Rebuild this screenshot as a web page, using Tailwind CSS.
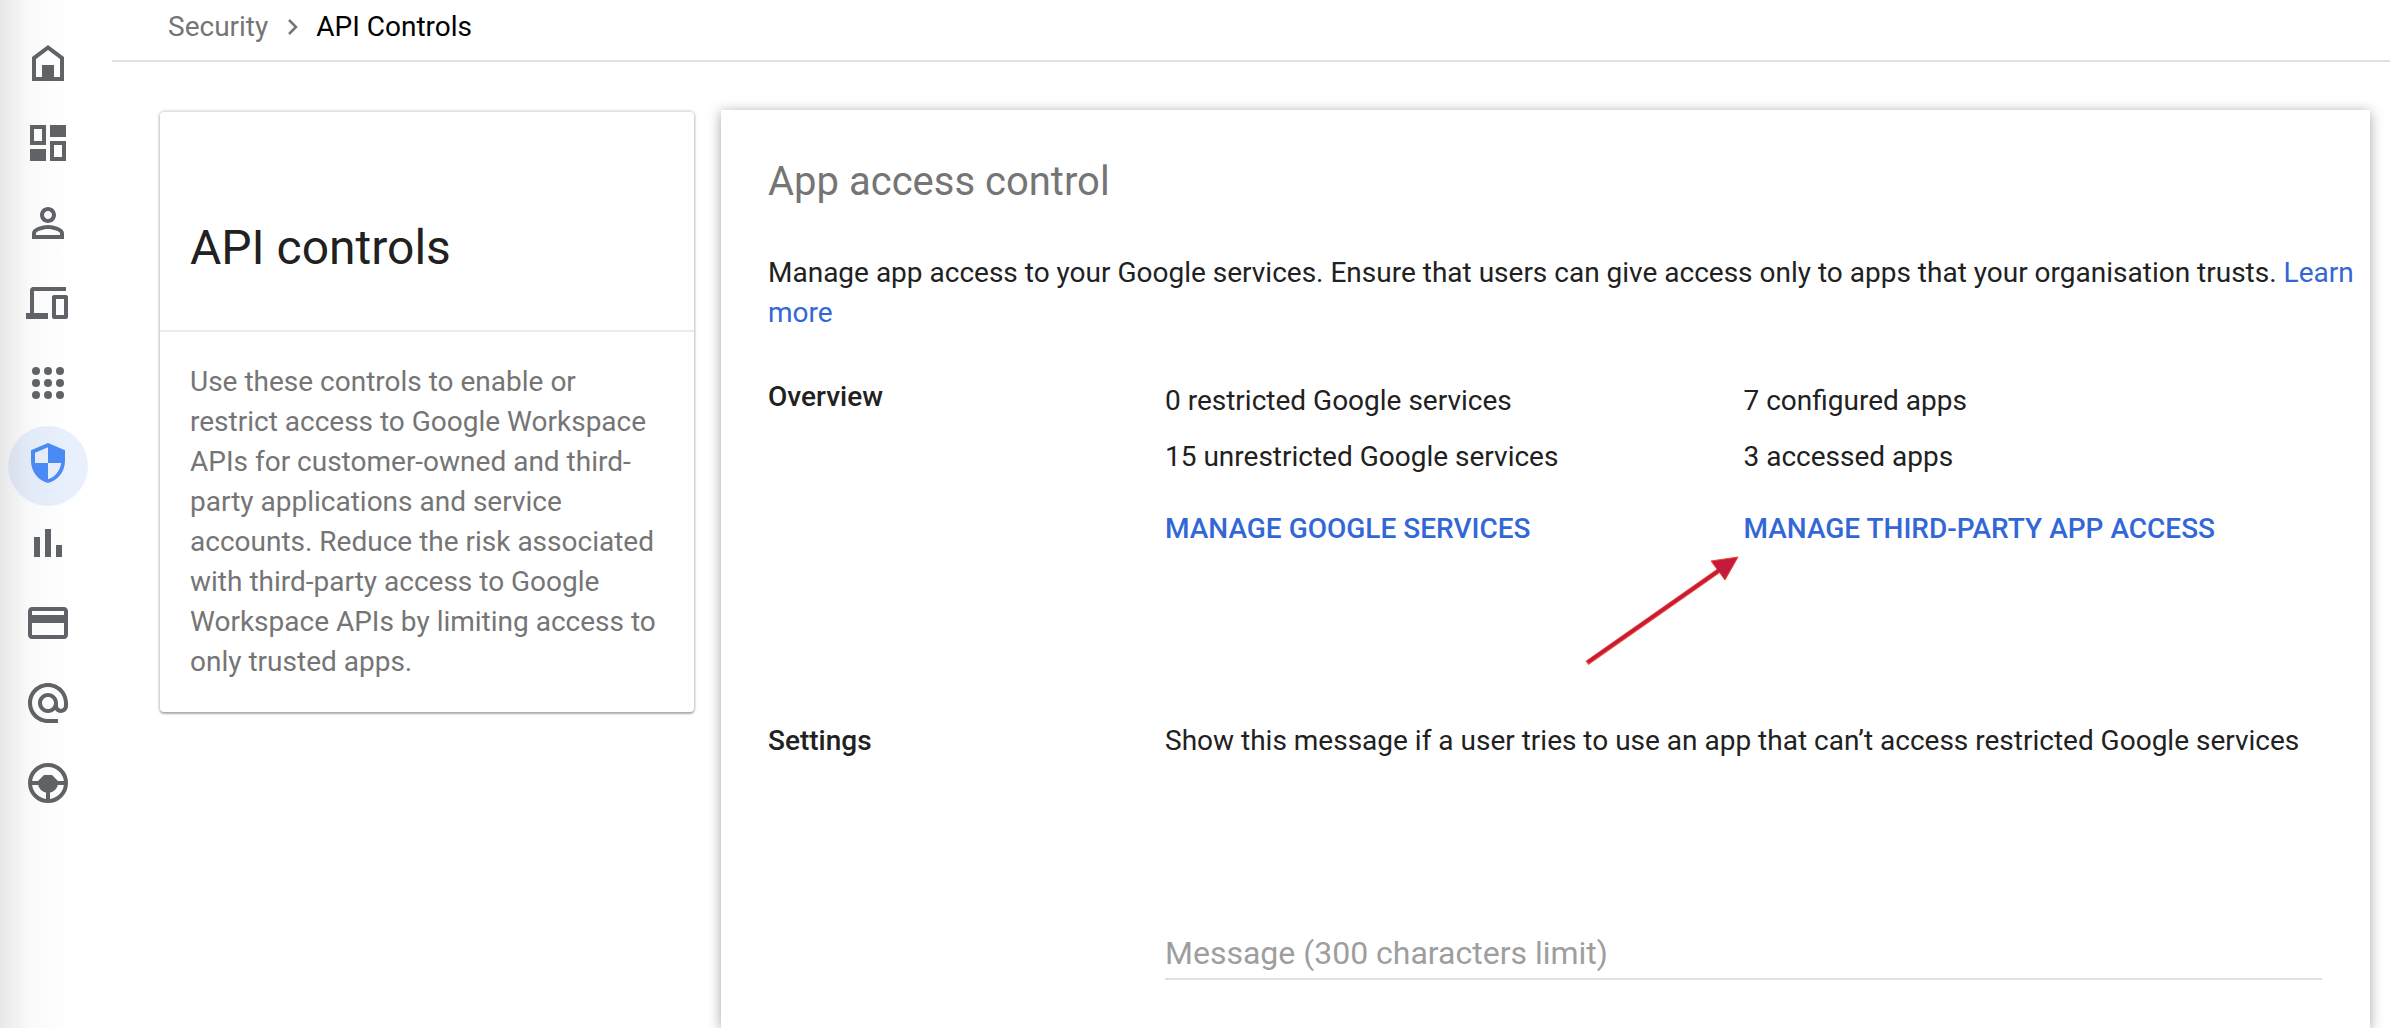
<!DOCTYPE html>
<html lang="en">
<head>
<meta charset="utf-8">
<title>API Controls</title>
<script src="https://cdn.jsdelivr.net/npm/@tailwindcss/browser@4"></script>
</head>
<body class="min-h-screen overflow-hidden bg-white font-[Roboto,sans-serif] text-[28px] leading-10 text-[#212121]">
<div class="flex h-screen">
  <nav aria-label="Admin sections" class="flex w-28 shrink-0 flex-col bg-linear-to-r from-[#e8e8e8] via-[#f9f9f9] via-25% to-white to-60% pt-[26px] pl-2 text-[#5f6368]">
    <a href="#" aria-label="Home" class="flex size-20 items-center justify-center pb-1.5"><svg class="size-12" viewBox="0 0 24 24" fill="currentColor"><path d="M12 3L4 9v12h16V9L12 3zm6 16H6v-9l6-4.500 6 4.500V19z"/><path d="M9 13h6v7H9z"/></svg></a>
    <a href="#" aria-label="Dashboard" class="flex size-20 items-center justify-center pb-1.5"><svg class="size-12" viewBox="0 0 24 24" fill="currentColor"><path fill-rule="evenodd" d="M3 3h8v10H3zM5 5v6h4V5zM13 3h8v6h-8zM3 15h8v6H3zM13 11h8v10h-8zM15 13v6h4v-6z"/></svg></a>
    <a href="#" aria-label="Directory" class="flex size-20 items-center justify-center pb-1.5"><svg class="size-12" viewBox="0 0 24 24" fill="currentColor"><path d="M12 6c1.100 0 2 .9 2 2s-.9 2-2 2-2-.9-2-2 .9-2 2-2m0 9c2.700 0 5.800 1.290 6 2v1H6v-.99c.2-.72 3.300-2.010 6-2.010m0-11C9.790 4 8 5.790 8 8s1.790 4 4 4 4-1.790 4-4-1.790-4-4-4zm0 9c-2.670 0-8 1.340-8 4v3h16v-3c0-2.660-5.330-4-8-4z"/></svg></a>
    <a href="#" aria-label="Devices" class="flex size-20 items-center justify-center pb-1.5"><svg class="size-12" viewBox="0 0 24 24" fill="currentColor"><path d="M4 6h17V4H5c-1.650 0-2 .9-2 2v11H1v3h11v-3H5V6zM21 8h-6c-.55 0-1 .45-1 1v10c0 .55.45 1 1 1h6c.55 0 1-.45 1-1V9c0-.55-.45-1-1-1zm-1 10h-4v-8h4v8z"/></svg></a>
    <a href="#" aria-label="Apps" class="flex size-20 items-center justify-center pb-1.5"><svg class="size-12" viewBox="0 0 24 24" fill="currentColor"><circle cx="6" cy="6" r="2"/><circle cx="12" cy="6" r="2"/><circle cx="18" cy="6" r="2"/><circle cx="6" cy="12" r="2"/><circle cx="12" cy="12" r="2"/><circle cx="18" cy="12" r="2"/><circle cx="6" cy="18" r="2"/><circle cx="12" cy="18" r="2"/><circle cx="18" cy="18" r="2"/></svg></a>
    <a href="#" aria-label="Security" aria-current="page" class="flex size-20 items-center justify-center rounded-full bg-[#4285f4]/12 pb-1.5 text-[#4a8af4]"><svg class="size-12" viewBox="0 0 24 24" fill="currentColor"><path fill-rule="evenodd" d="M12 2L3.500 5.600V11c0 5.200 3.600 9.900 8.500 11 4.900-1.100 8.500-5.800 8.500-11V5.600zM12 4.100V12h6.600c-.5 3.900-3.100 7.200-6.600 8.100V12H5.500V6.850z"/></svg></a>
    <a href="#" aria-label="Reporting" class="flex size-20 items-center justify-center pb-1.5"><svg class="size-12" viewBox="0 0 24 24" fill="currentColor"><path d="M5 9h3v10H5zM10.500 5h3v14h-3zM16 13h3v6h-3z"/></svg></a>
    <a href="#" aria-label="Billing" class="flex size-20 items-center justify-center pb-1.5"><svg class="size-12" viewBox="0 0 24 24" fill="currentColor"><path d="M20 4H4c-1.110 0-1.990.89-1.990 2L2 18c0 1.110.89 2 2 2h16c1.110 0 2-.89 2-2V6c0-1.110-.89-2-2-2zm0 14H4v-6h16v6zm0-10H4V6h16v2z"/></svg></a>
    <a href="#" aria-label="Account" class="flex size-20 items-center justify-center pb-1.5"><svg class="size-12" viewBox="0 0 24 24" fill="currentColor"><path d="M12 2C6.480 2 2 6.480 2 12s4.480 10 10 10h5v-2h-5c-4.340 0-8-3.660-8-8s3.660-8 8-8 8 3.660 8 8v1.430c0 .79-.71 1.570-1.500 1.570s-1.500-.78-1.500-1.570V12c0-2.760-2.240-5-5-5s-5 2.240-5 5 2.240 5 5 5c1.380 0 2.640-.56 3.540-1.470.65.89 1.770 1.470 2.960 1.470 1.970 0 3.500-1.600 3.500-3.570V12c0-5.520-4.480-10-10-10zm0 13c-1.660 0-3-1.340-3-3s1.340-3 3-3 3 1.340 3 3-1.340 3-3 3z"/></svg></a>
    <a href="#" aria-label="Rules" class="flex size-20 items-center justify-center pb-1.5"><svg class="size-12" viewBox="0 0 24 24" fill="none" stroke="currentColor" stroke-width="2"><circle cx="12" cy="12" r="9"/><path d="M3 12h18M12 12v9"/><path fill="currentColor" stroke="none" d="M10 8h4l3 3v1a5 5 0 0 1-10 0v-1z"/></svg></a>
  </nav>

  <div class="flex min-w-0 grow flex-col">
    <header class="flex h-[62px] shrink-0 items-center border-b-2 border-[#e0e0e0] pb-1.5 pl-14">
      <nav aria-label="Breadcrumb" class="flex items-center">
        <a href="#" class="text-[#757575]">Security</a>
        <svg class="mx-4 size-4" viewBox="0 0 16 16" fill="none" stroke="#757575" stroke-width="2.500"><path d="M5 1l7 7-7 7"/></svg>
        <span class="text-black" aria-current="page">API Controls</span>
      </nav>
    </header>

    <div class="flex min-h-0 grow items-start pt-12 pr-5 pl-12">
      <aside class="mt-0.5 mr-[27px] w-[534px] shrink-0 rounded-sm bg-white shadow-[0_0_0_2px_rgba(0,0,0,0.04),0_2px_2px_rgba(0,0,0,0.24),0_0_4px_rgba(0,0,0,0.18)]">
        <h1 class="border-b-2 border-[#ebebeb] px-[30px] pt-[106px] pb-[52px] text-[48px] leading-[60px]">API controls</h1>
        <p class="p-[30px] text-[#757575]">Use these controls to enable or restrict access to Google Workspace APIs for customer-owned and third-party applications and service accounts. Reduce the risk associated with third-party access to Google Workspace APIs by limiting access to only trusted apps.</p>
      </aside>

      <main class="h-full grow bg-white pt-[49px] pl-[47px] shadow-[0_2px_12px_rgba(0,0,0,0.36)]">
        <h2 class="text-[40px] leading-[46px] text-[#757575]">App access control</h2>
        <p class="mt-12">Manage app access to your Google services. Ensure that users can give access only to apps that your organisation trusts. <a href="#" class="text-[#3367d6]">Learn more</a></p>

        <section class="mt-11 mr-12 grid grid-cols-[397px_1fr_1fr]">
          <h3 class="font-medium">Overview</h3>
          <div class="flex flex-col items-start pt-1">
            <p>0 restricted Google services</p>
            <p class="mt-4">15 unrestricted Google services</p>
            <a href="#" class="mt-8 font-medium text-[#3367d6]">MANAGE GOOGLE SERVICES</a>
          </div>
          <div class="relative flex flex-col items-start pt-1">
            <p>7 configured apps</p>
            <p class="mt-4">3 accessed apps</p>
            <a href="#" class="mt-8 font-medium text-[#3367d6]">MANAGE THIRD-PARTY APP ACCESS</a>
            <svg class="absolute top-[176px] -left-40 h-[114px] w-40" viewBox="0 0 160 114" aria-hidden="true"><path d="M3 110L140 14" stroke="#f0472c" stroke-width="5"/><path d="M154 4L127 8l14 19z" fill="#c41a3e" stroke="#f0472c" stroke-width="1"/><path d="M4 109L140 14" stroke="#c41a3e" stroke-width="3"/></svg>
          </div>
        </section>

        <section class="mt-[172px] mr-12 grid grid-cols-[397px_1fr]">
          <h3 class="font-medium">Settings</h3>
          <div>
            <label for="message">Show this message if a user tries to use an app that can’t access restricted Google services</label>
            <input id="message" type="text" maxlength="300" placeholder="Message (300 characters limit)" class="mt-[167px] block h-[52px] w-full border-b-2 border-[#e0e0e0] bg-transparent text-[32px] placeholder:text-[#9e9e9e] outline-none">
          </div>
        </section>
      </main>
    </div>
  </div>
</div>
</body>
</html>
